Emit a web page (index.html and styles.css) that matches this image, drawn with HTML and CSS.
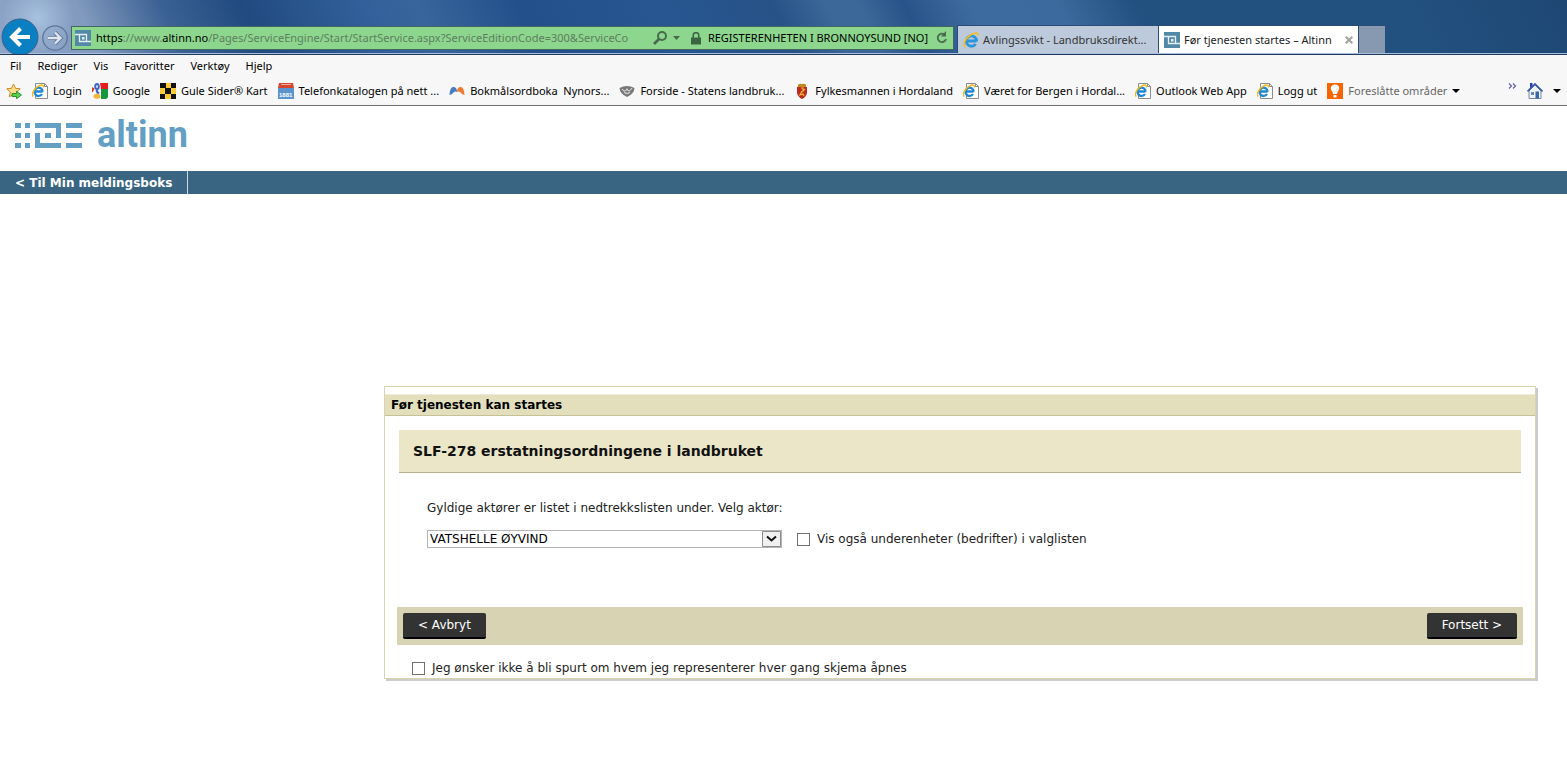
FILE: index.html
```html
<!DOCTYPE html>
<html lang="no">
<head>
<meta charset="utf-8">
<title>Før tjenesten startes – Altinn</title>
<link rel="stylesheet" href="styles.css">
</head>
<body>
<svg class="defs" aria-hidden="true">
  <symbol id="ie-e" viewBox="0 0 16 16">
    <path d="M13.500 9H4.500M13.600 9.500A5.200 5.200 0 1 0 12.700 12" fill="none" stroke="#2e95da" stroke-width="2.800"/>
    <path d="M2.500 15C-1.500 13 3 5.500 8 2.800 12 .4 15.500.2 15 4" fill="none" stroke="#f2bf1c" stroke-width="1.600"/>
  </symbol>
  <symbol id="ie-page" viewBox="0 0 16 16">
    <path d="M3.500.5h9l3 3v12h-12z" fill="#fff" stroke="#8c8c8c"/>
    <path d="M12.500.5v3h3" fill="none" stroke="#8c8c8c"/>
    <path d="M10.500 8.500H3M10.600 8.700A4 4.200 0 1 0 10 11" fill="none" stroke="#2187d2" stroke-width="2.300"/>
    <path d="M1.200 13.500C-1.500 11 3 5 6.500 3.200 9.500 1.500 12 1.500 11.300 4.500" fill="none" stroke="#f0b81a" stroke-width="1.400"/>
  </symbol>
  <symbol id="altinn" viewBox="0 0 16 16">
    <path d="M0 0h16v16H0z" fill="#5289a8"/>
    <path d="M0 4.500h11.500v7M4.500 4.500v7H16" fill="none" stroke="#e6ecef" stroke-width="1.300"/>
    <path d="M7 7h2.500v2.500H7z" fill="#e6ecef"/>
  </symbol>
</svg>

<header class="browser">
  <div class="titlebar">
    <button class="back" aria-label="Tilbake"><svg viewBox="0 0 38 38"><circle cx="19" cy="19" r="18" fill="#0a7fc2" stroke="#3a6288"/><path d="M29 19H12M19.500 10.500 11 19l8.500 8.500" fill="none" stroke="#fff" stroke-width="4"/></svg></button>
    <button class="forward" aria-label="Frem"><svg viewBox="0 0 26 26"><circle cx="13" cy="13" r="12.200" fill="#8fa7c9" fill-opacity=".5" stroke="#5c7599" stroke-width="1.300"/><path d="M6 13h12M13 7.500l5.500 5.500-5.500 5.500" fill="none" stroke="#607494" stroke-width="4"/><path d="M6 13h12M13 7.500l5.500 5.500-5.500 5.500" fill="none" stroke="#dfe6f0" stroke-width="2.400"/></svg></button>
    <div class="address">
      <svg class="icon"><use href="#altinn"/></svg>
      <div class="url"><b>https</b>://www.<b>altinn.no</b>/Pages/ServiceEngine/Start/StartService.aspx?ServiceEditionCode=300&amp;ServiceCo</div>
      <button class="tool" aria-label="Søk"><svg width="28" height="16" viewBox="0 0 28 16"><circle cx="9" cy="6" r="4" fill="none" stroke="#476b4a" stroke-width="2"/><path d="M6 9l-5 5" stroke="#476b4a" stroke-width="2.600"/><path d="M20 6h7l-3.500 4z" fill="#476b4a"/></svg></button>
      <svg class="lock" viewBox="0 0 10 13"><path d="M2.200 6V3.500a2.800 2.800 0 0 1 5.600 0V6" fill="none" stroke="#3d6441" stroke-width="1.500"/><path d="M0 5.500h10V12.500H0z" fill="#3d6441"/></svg>
      <span class="owner">REGISTERENHETEN I BRONNOYSUND [NO]</span>
      <button class="tool" aria-label="Oppdater"><svg width="12" height="14" viewBox="0 0 12 14"><path d="M8.800 3.800A4.200 4.200 0 1 0 10 8" fill="none" stroke="#476b4a" stroke-width="1.800"/><path d="M10 0v5.500H4.800z" fill="#476b4a"/></svg></button>
    </div>
    <nav class="tabs">
      <a class="tab" href="#"><svg class="icon"><use href="#ie-e"/></svg><span>Avlingssvikt - Landbruksdirekt...</span></a>
      <a class="tab current" href="#"><svg class="icon"><use href="#altinn"/></svg><span>Før tjenesten startes – Altinn</span><svg class="close" viewBox="0 0 8 8"><path d="M.7.7l6.600 6.600M7.300.7L.7 7.300" stroke="#a0a0a0" stroke-width="2"/></svg></a>
      <button class="newtab" aria-label="Ny fane"></button>
    </nav>
  </div>
  <nav class="menu">
    <a href="#">Fil</a><a href="#">Rediger</a><a href="#">Vis</a><a href="#">Favoritter</a><a href="#">Verktøy</a><a href="#">Hjelp</a>
  </nav>
  <nav class="favorites">
    <button class="tool" aria-label="Legg til favoritt"><svg class="icon" viewBox="0 0 16 16"><path d="M7.500 1l2 4.300 4.700.5-3.500 3.200 1 4.800-4.200-2.400-4.200 2.400 1-4.800L.8 5.800l4.700-.5z" fill="#ffe08a" stroke="#c9892a"/><path d="M6 10.500h4.500V8.200l5 3.800-5 3.800v-2.300H6z" fill="#5ed04f" stroke="#218a28" stroke-width=".9"/></svg></button>
    <a href="#"><svg class="icon"><use href="#ie-page"/></svg>Login</a>
    <a href="#"><svg class="icon" viewBox="0 0 16 16"><path d="M0 0h16v16H0z" fill="#f8f8f8"/><path d="M8 0h8v6H9z" fill="#e51d1d"/><path d="M9 6h7v7q0 3-3 3H9z" fill="#14973f"/><path d="M0 4l2.500 1.500L1 9H0z" fill="#d83a2c"/><ellipse cx="5" cy="3.500" rx="1.800" ry="2.500" fill="#f8f8f8" stroke="#3a68c4" stroke-width="2"/><path d="M5.500 6.500q-2 2 1.500 4" fill="none" stroke="#3a68c4" stroke-width="2.200"/><ellipse cx="5" cy="13.300" rx="3.500" ry="2.500" fill="#efb63a"/></svg>Google</a>
    <a href="#"><svg class="icon" viewBox="0 0 16 16"><path d="M0 0h16v16H0z" fill="#ffcc33"/><path d="M0 0h6v5H0zM11 0h5v5h-5zM5 5h6v6H5zM0 11h5v5H0zM11 11h5v5h-5z" fill="#111"/></svg>Gule Sider® Kart</a>
    <a href="#"><svg class="icon" viewBox="0 0 16 16"><path d="M0 5h16v11H0z" fill="#5b93cc"/><path d="M1 0h14l1 5H0z" fill="#d5442d"/><path d="M3 1.500h10" stroke="#f3b0a0"/><text x="1" y="14" class="mini">1881</text></svg>Telefonkatalogen på nett ...</a>
    <a href="#"><svg class="icon" viewBox="0 0 16 16"><path d="M.5 12Q1 3 5 4q3 .5 3 5-2-1-3.500.5Q3 11.500.5 12z" fill="#4b7cc4"/><path d="M15.500 12Q15 3 11 4 8 4.500 8 9q2-1 3.500.5 1.500 2 4 2.500z" fill="#ee7b32"/></svg>Bokmålsordboka&nbsp; Nynors...</a>
    <a href="#"><svg class="icon" viewBox="0 0 16 16"><path d="M.5 5Q8 1 15.500 5q-.5 6-7.500 9Q1 11 .5 5z" fill="#777"/><path d="M3 6q3 4 5 0 2 4 5-1M5 9q3 3 6 0" fill="none" stroke="#d0d0d0" stroke-width="1.200"/></svg>Forside - Statens landbruk...</a>
    <a href="#"><svg class="icon" viewBox="0 0 16 16"><path d="M4 4Q3 0 8 1q5-1 4 3z" fill="#bd8c25"/><path d="M3 4h10v6q-1 4-5 6-4-2-5-6z" fill="#bb2a20"/><path d="M7 5h2v3l2-2M8 8l-2 4 3-1 1 2" fill="none" stroke="#e9b936" stroke-width="1.200"/></svg>Fylkesmannen i Hordaland</a>
    <a href="#"><svg class="icon"><use href="#ie-page"/></svg>Været for Bergen i Hordal...</a>
    <a href="#"><svg class="icon"><use href="#ie-page"/></svg>Outlook Web App</a>
    <a href="#"><svg class="icon"><use href="#ie-page"/></svg>Logg ut</a>
    <a class="suggested" href="#"><svg class="icon" viewBox="0 0 16 16"><path d="M0 0h16v16H0z" fill="#f86400"/><path d="M6 11q0-1.500-1.500-3.500C2.500 4 5 1.500 8 1.500S13.500 4 11.500 7.500Q10 9.500 10 11zM6.500 12h3v2.500h-3z" fill="#fff"/></svg>Foreslåtte områder<svg class="arrow" viewBox="0 0 8 4"><path d="M0 0h8L4 4z"/></svg></a>
    <span class="more">
      <button class="tool raised" aria-label="Flere favoritter"><svg width="9" height="6" viewBox="0 0 9 6"><path d="M1 .5L3.500 3 1 5.500M5 .5L7.500 3 5 5.500" fill="none" stroke="#625f9f" stroke-width="1.200"/></svg></button>
      <button class="tool" aria-label="Hjem"><svg class="icon" viewBox="0 0 16 16"><path d="M2 8l6-6 6 6v7.500H2z" fill="#eef2f8" stroke="#7887a2"/><path d="M.5 8.500L8 1l7.500 7.500" fill="none" stroke="#3956b5" stroke-width="1.700"/><path d="M3 0h2.500v3L3 5z" fill="#273fae"/><path d="M8.500 8.500H12v7H8.500z" fill="#3568a8"/><path d="M4 9h3v3H4z" fill="#6288b4"/></svg></button>
      <button class="tool" aria-label="Hjemmesidevalg"><svg class="arrow" viewBox="0 0 8 4"><path d="M0 0h8L4 4z"/></svg></button>
    </span>
  </nav>
</header>

<div class="brand">
  <a class="logo" href="#" aria-label="altinn"><svg width="68" height="25" viewBox="0 0 68 25" fill="#629fc3"><path d="M0 0h6v5H0zM10 0h5v5h-5zM0 10h6v5H0zM10 10h5v5h-5zM0 20h6v5H0zM10 20h5v5h-5zM20 0h26v15h-5V5H20zM20 10h5v10h21v5H20zM30 10h6v5h-6zM51 0h16v5H51zM51 10h16v5H51zM51 20h16v5H51z"/></svg><span>altinn</span></a>
</div>
<nav class="pagebar"><a href="#">&lt; Til Min meldingsboks</a></nav>

<main class="page">
  <form class="panel">
    <h1>Før tjenesten kan startes</h1>
    <h2>SLF-278 erstatningsordningene i landbruket</h2>
    <div class="fields">
      <label for="actor">Gyldige aktører er listet i nedtrekkslisten under. Velg aktør:</label>
      <div class="row">
        <div class="picker">
          <select id="actor"><option>VATSHELLE ØYVIND</option></select>
          <svg viewBox="0 0 19 16"><path d="M.5.500h18v15H.5z" fill="#f0f0f0" stroke="#8c8c8c"/><path d="M5 5.500l4.500 4 4.500-4" fill="none" stroke="#111" stroke-width="2"/></svg>
        </div>
        <label class="check"><input type="checkbox">Vis også underenheter (bedrifter) i valglisten</label>
      </div>
    </div>
    <div class="actions"><button type="button">&lt; Avbryt</button><button type="button">Fortsett &gt;</button></div>
    <label class="check remember"><input type="checkbox">Jeg ønsker ikke å bli spurt om hvem jeg representerer hver gang skjema åpnes</label>
  </form>
</main>
</body>
</html>
```
FILE: styles.css
```css
* { box-sizing: border-box; }
body { margin: 0; background: #fff; color: #222; font: 12px/16px "DejaVu Sans", Verdana, sans-serif; }
a { color: inherit; text-decoration: none; }
button { font: inherit; border: 0; padding: 0; background: none; color: inherit; }
svg { display: block; flex: none; }
.defs { position: absolute; width: 0; height: 0; }
.icon { width: 16px; height: 16px; }
.tool { display: flex; flex: none; }
.mini { font: bold 6px "Liberation Sans", sans-serif; fill: #fff; }

.browser { font: 11px/16px "Noto Sans", "Segoe UI", sans-serif; color: #000; background: #f7f7f7; border-bottom: 1px solid #707070; white-space: nowrap; }
.titlebar {
  display: flex; align-items: flex-end; height: 55px; overflow: hidden;
  border-bottom: 1px solid #1f3a5f; box-shadow: inset 0 -1px #a9bedb;
  background:
    radial-gradient(circle at 38px 18px, #b9d5f0a0 0, #b9d5f000 36px),
    linear-gradient(65deg, #8ea5c8 0, #829abe 90px, #3c6294 165px, #204a80 240px, #33609a 350px, #38659b 400px, #23508a 490px, #275690 620px, #275288 720px, #3c6799 770px, #3c6799 800px, #28538a 840px, #3e6b9f 900px, #3c6a9e 980px, #22507f 1050px, #22507f 1300px, #1e4774 1440px, #315b87 1500px);
}
.back { width: 38px; height: 36px; margin-left: 1px; overflow: hidden; flex: none; }
.forward { width: 26px; height: 26px; margin: 0 3px 3px 3px; flex: none; }
.address { display: flex; align-items: center; flex: 1; min-width: 0; height: 24px; margin-bottom: 4px; padding: 0 5px 0 3px; background: #8dd68d; border: 1px solid #41655f; }
.url { flex: 1; min-width: 0; overflow: hidden; margin: 0 6px 0 5px; color: #5f7d62; }
.url b { font-weight: normal; color: #000; }
.lock { width: 10px; height: 13px; margin: 0 7px 0 10px; }
.owner { margin-right: 8px; }
.tabs { display: flex; flex: none; height: 28px; margin: 0 181px 1px 3px; border: 1px solid #294c78; border-bottom: 0; }
.tab { display: flex; align-items: center; gap: 4px; width: 200px; padding: 0 5px; color: #333; background: #bccadb; }
.current { color: #222; background: #fff; border-left: 1px solid #294c78; }
.close { width: 8px; height: 8px; margin-left: auto; }
.newtab { width: 27px; background: #8799b0; border-left: 1px solid #294c78; }
.menu { display: flex; gap: 16px; padding: 3px 10px; }
.favorites { display: flex; align-items: center; height: 28px; padding: 0 6px; gap: 10px; }
.favorites a { display: flex; align-items: center; gap: 5px; }
.favorites .suggested { color: #666; }
.arrow { width: 8px; height: 4px; fill: #000; }
.more { display: flex; align-items: center; gap: 10px; margin-left: auto; }
.raised { align-self: flex-start; }

.brand { padding: 16px 15px; height: 65px; }
.logo { display: flex; align-items: center; gap: 14px; width: max-content; color: #629fc3; font: bold 36px/26px Roboto, sans-serif; }
.pagebar { display: flex; background: #396583; color: #fff; font-weight: bold; }
.pagebar a { padding: 4px 15px 3px; border-right: 1px solid #cfdae2; }

.page { padding: 192px 31px 24px 384px; }
.panel { padding-top: 7px; border: 1px solid #d8d4b2; box-shadow: 2px 2px 0 #ccc; }
.panel h1 { margin: 0; padding: 2px 6px; font-size: 12px; line-height: 16px; color: #000; background: #e3dfbd; border-top: 1px solid #efecd4; border-bottom: 1px solid #c6c197; }
.panel h2 { margin: 14px 14px 0; padding: 11px 14px; font-size: 14px; line-height: 20px; color: #111; background: #eae6c7; border-bottom: 1px solid #b5b18d; }
.fields { padding: 27px 42px 59px; }
.row { display: flex; align-items: center; gap: 15px; margin-top: 14px; }
.picker { position: relative; width: 355px; }
.picker select { display: block; width: 100%; height: 18px; padding: 0 2px; appearance: none; border: 1px solid #b5b5b5; border-radius: 0; background: #fff; color: #000; font: inherit; }
.picker svg { position: absolute; right: 1px; top: 1px; width: 19px; height: 16px; pointer-events: none; }
.check { display: flex; align-items: center; gap: 7px; }
.check input { appearance: none; flex: none; width: 13px; height: 13px; margin: 0; border: 1px solid #707070; background: #fff; }
.actions { display: flex; justify-content: space-between; margin: 0 12px; padding: 6px; background: #d8d3b2; }
.actions button { padding: 4px 15px; height: 26px; color: #fff; background: #333; border-bottom: 2px solid #000; border-radius: 2px; }
.remember { padding: 15px 27px 2px; }
```
